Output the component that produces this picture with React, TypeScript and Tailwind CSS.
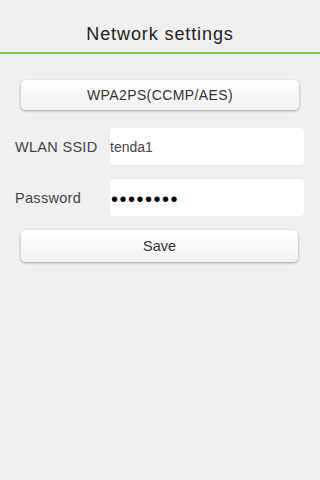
import React from "react";

export default function App() {
  return (
    <div className="w-[320px] h-[480px] bg-[#f0f0f0] flex flex-col" style={{ fontFamily: '"Liberation Sans", Arial, sans-serif' }}>
      <div className="h-[52px] flex items-center justify-center pt-[17px] text-[18px] tracking-[0.9px] text-[#222]">
        Network settings
      </div>
      <div className="h-[2px] bg-[#7acb4c]" />
      <div className="flex flex-col pt-[26px]">
        <div className="px-[21px]">
          <button className="w-full h-[30px] rounded-[5px] bg-gradient-to-b from-white to-[#f2f2f2] shadow-[0_1px_3px_rgba(0,0,0,0.35)] text-[14px] tracking-[0.4px] text-[#333] flex items-center justify-center pt-[1px]">
            WPA2PS(CCMP/AES)
          </button>
        </div>
        <div className="flex items-center mt-[18px] h-[37px]">
          <div className="w-[110px] pl-[15px] pt-[2px] text-[14.5px] tracking-[0.3px] text-[#444]">WLAN SSID</div>
          <div className="w-[194px] h-[37px] bg-white rounded-[3px] shadow-[0_0_1px_rgba(0,0,0,0.15)] flex items-center pt-[1px] text-[14px] text-[#444]">
            tenda1
          </div>
        </div>
        <div className="flex items-center mt-[14px] h-[37px]">
          <div className="w-[110px] pl-[15px] pt-[2px] text-[14.5px] tracking-[0.3px] text-[#444]">Password</div>
          <div className="w-[194px] h-[37px] bg-white rounded-[3px] shadow-[0_0_1px_rgba(0,0,0,0.15)] flex items-center pl-[1px] pt-[2px] text-[20px] text-black tracking-[1.5px]">
            ••••••••
          </div>
        </div>
        <div className="pl-[21px] pr-[22px] mt-[14px]">
          <button className="w-full h-[32px] rounded-[5px] bg-gradient-to-b from-white to-[#f2f2f2] shadow-[0_1px_3px_rgba(0,0,0,0.35)] text-[14.5px] text-[#333] flex items-center justify-center pt-[1px]">
            Save
          </button>
        </div>
      </div>
    </div>
  );
}
